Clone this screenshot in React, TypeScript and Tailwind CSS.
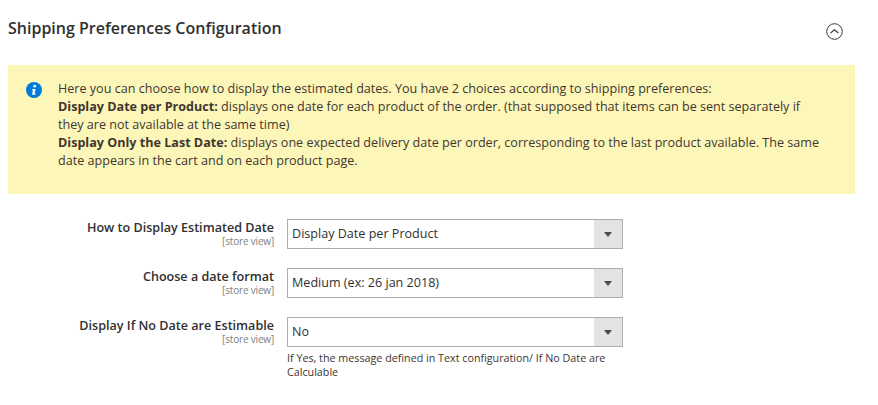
const rows = [
  { label: 'How to Display Estimated Date', value: 'Display Date per Product' },
  { label: 'Choose a date format', value: 'Medium (ex: 26 jan 2018)' },
  {
    label: 'Display If No Date are Estimable',
    value: 'No',
    note: 'If Yes, the message defined in Text configuration/ If No Date are Calculable',
  },
];

export default function App() {
  return (
    <div className="w-[878px] h-[405px] overflow-hidden bg-white font-['Open_Sans',sans-serif] text-[#41362f]">
      <div className="flex items-start justify-between w-[855px] ml-2 h-[65px]">
        <h2 className="text-[16px] leading-[22px] font-semibold mt-[17px] text-[#303030]">Shipping Preferences Configuration</h2>
        <svg viewBox="0 0 17 17" fill="none" stroke="#41362f" className="w-[17px] h-[17px] mt-[23px] mr-[20px]">
          <circle cx="8.5" cy="8.5" r="7.8" strokeWidth="1" />
          <path d="M4.6 10 8.5 6.8 12.4 10" strokeWidth="1.1" />
        </svg>
      </div>

      <div className="flex w-[847px] h-[129px] ml-2 pt-[15px] pl-[18px] pr-[30px] bg-[#fdf6b9] text-[12.58px] leading-[18px]">
        <svg viewBox="0 0 16 16" className="w-4 h-4 mt-[2px] shrink-0">
          <circle cx="8" cy="8" r="8" fill="#007bdb" />
          <circle cx="8.7" cy="4.2" r="1.4" fill="#fff" />
          <path d="M6.3 7h3.3l-1 4.6h1l-.3 1.2H6l1-4.6H6z" fill="#fff" />
        </svg>
        <p className="ml-4">
          Here you can choose how to display the estimated dates. You have 2 choices according to shipping preferences:
          <br />
          <b>Display Date per Product:</b> displays one date for each product of the order. (that supposed that items can be sent separately if they are not available at the same time)
          <br />
          <b>Display Only the Last Date:</b> displays one expected delivery date per order, corresponding to the last product available. The same date appears in the cart and on each product page.
        </p>
      </div>

      <div className="flex flex-col gap-[19px] mt-[25px]">
        {rows.map((row) => (
          <div key={row.label} className="flex">
            <div className="w-[274px] text-right pt-[1px]">
              <div className="text-[12.58px] leading-[16px] font-semibold text-[#303030]">{row.label}</div>
              <div className="text-[10px] tracking-[-0.18px] leading-[11px] text-[#808080]">[store view]</div>
            </div>
            <div className="w-[336px] ml-[13px]">
              <div className="flex h-[30px] border border-[#adadad]">
                <div className="flex-1 pl-1 text-[12.58px] leading-[28px] text-[#303030]">{row.value}</div>
                <div className="flex items-center justify-center w-7 bg-[#e3e3e3]">
                  <div className="w-0 h-0 border-x-[4px] border-x-transparent border-t-[5px] border-t-[#514943]" />
                </div>
              </div>
              {row.note && <p className="mt-[4px] text-[10.74px] leading-[14px] text-[#41362f]">{row.note}</p>}
            </div>
          </div>
        ))}
      </div>
    </div>
  );
}
